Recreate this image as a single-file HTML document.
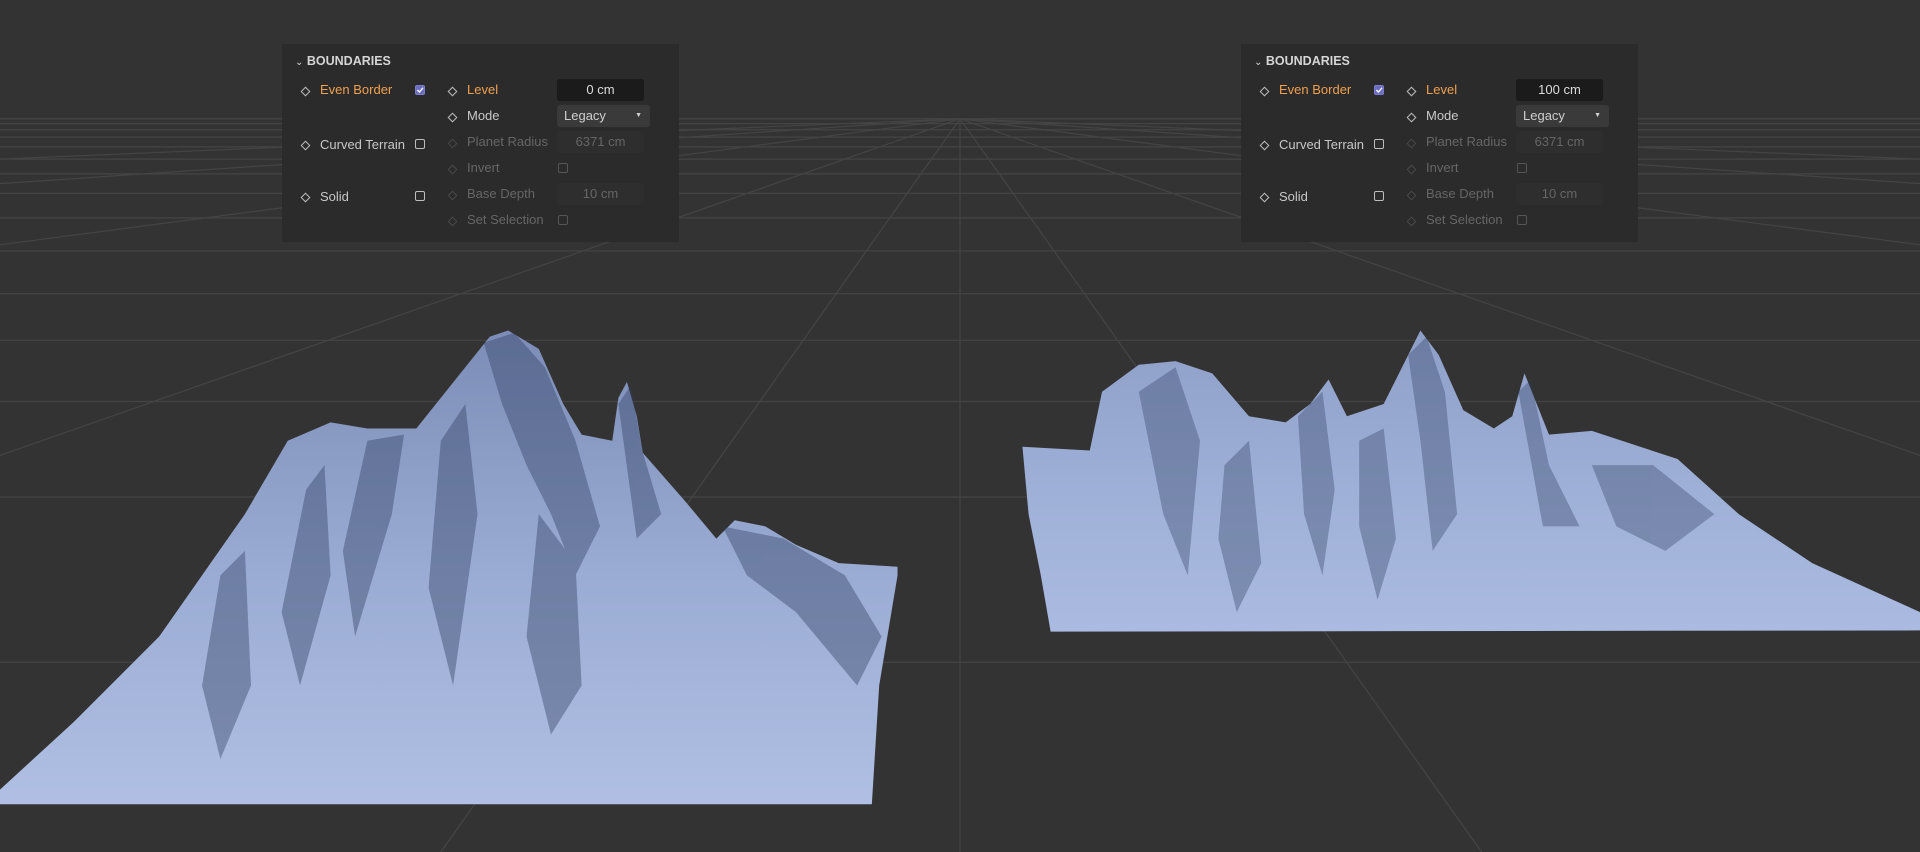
<!DOCTYPE html>
<html><head><meta charset="utf-8"><style>
html,body{margin:0;padding:0;width:1920px;height:852px;overflow:hidden;background:#333333;font-family:"Liberation Sans",sans-serif}
svg.bg{position:absolute;left:0;top:0}
.panel{position:absolute;top:44px;width:397px;height:198px;background:#2b2b2b;color:#c8c8c8;font-size:13px}
.panel .t{position:absolute;white-space:nowrap;line-height:16px}
.hd{font-weight:bold;color:#d6d6d6;font-size:12.5px}
.or{color:#f0a050}
.dim{color:#666}
.dia{position:absolute;width:5px;height:5px;border:1.2px solid #bdbdbd;transform:rotate(45deg)}
.dia.d{border-color:#484848}
.cb{position:absolute;width:8px;height:8px;border:1.2px solid #bdbdbd;border-radius:2px}
.cb.d{border-color:#555}
.cb.on{background:#6c6cc0;border-color:#7c7cd0}
.inp{position:absolute;height:22px;border-radius:3px;text-align:center;line-height:22px;font-size:13px}
</style></head><body>
<svg class="bg" width="1920" height="852" viewBox="0 0 1568 696" preserveAspectRatio="none">
<defs>
<linearGradient id="g1" x1="0" y1="0" x2="0" y2="1">
<stop offset="0" stop-color="#7b8cb6"/><stop offset="0.5" stop-color="#9aabd3"/><stop offset="1" stop-color="#b0bfe3"/></linearGradient>
<linearGradient id="g2" x1="0" y1="0" x2="0" y2="1">
<stop offset="0" stop-color="#8e9fc8"/><stop offset="0.6" stop-color="#a1b2d9"/><stop offset="1" stop-color="#aabae0"/></linearGradient>
</defs>
<g stroke="#444" stroke-width="1" fill="none">
<line x1="0" y1="97" x2="1568" y2="97"/><line x1="0" y1="101" x2="1568" y2="101"/><line x1="0" y1="106" x2="1568" y2="106"/><line x1="0" y1="112" x2="1568" y2="112"/><line x1="0" y1="120" x2="1568" y2="120"/><line x1="0" y1="130" x2="1568" y2="130"/><line x1="0" y1="142" x2="1568" y2="142"/><line x1="0" y1="158" x2="1568" y2="158"/><line x1="0" y1="178" x2="1568" y2="178"/><line x1="0" y1="205" x2="1568" y2="205"/><line x1="0" y1="240" x2="1568" y2="240"/><line x1="0" y1="278" x2="1568" y2="278"/><line x1="0" y1="328" x2="1568" y2="328"/><line x1="0" y1="406" x2="1568" y2="406"/><line x1="0" y1="541" x2="1568" y2="541"/>
<line x1="784" y1="97" x2="784" y2="696"/>
<line x1="784" y1="97" x2="0" y2="372"/><line x1="784" y1="97" x2="0" y2="200"/><line x1="784" y1="97" x2="0" y2="150"/>
<line x1="784" y1="97" x2="1568" y2="372"/><line x1="784" y1="97" x2="1568" y2="200"/><line x1="784" y1="97" x2="1568" y2="150"/>
<line x1="784" y1="97" x2="360" y2="696"/><line x1="784" y1="97" x2="1210" y2="696"/>
<line x1="784" y1="97" x2="0" y2="130"/><line x1="784" y1="97" x2="1568" y2="130"/>
</g>
<polygon fill="url(#g1)" points="0,645 60,590 130,520 200,420 235,360 270,345 300,350 340,350 380,300 400,275 415,270 440,285 460,330 475,355 500,360 505,325 512,312 520,340 525,370 560,410 585,440 600,425 625,430 650,445 685,460 733,463 733,470 718,560 712,657 0,657"/>
<g fill="#2e3d60" opacity="0.4">
<polygon points="395,280 420,272 445,300 470,360 490,430 470,470 450,420 430,380 410,330"/>
<polygon points="505,330 515,315 525,370 540,420 520,440"/>
<polygon points="300,360 330,355 320,420 290,520 280,450"/>
<polygon points="250,400 265,380 270,470 245,560 230,500"/>
<polygon points="360,360 380,330 390,420 370,560 350,480"/>
<polygon points="590,430 640,440 690,470 720,520 700,560 650,500 610,470"/>
<polygon points="180,470 200,450 205,560 180,620 165,560"/>
<polygon points="440,420 470,460 475,560 450,600 430,520"/>
</g>
<polygon fill="url(#g2)" points="835,365 890,368 900,320 930,298 960,295 990,305 1020,340 1050,345 1070,330 1085,310 1100,340 1130,330 1145,300 1160,270 1175,290 1195,335 1220,350 1235,340 1245,305 1255,330 1265,355 1300,352 1370,375 1420,420 1480,460 1568,500 1568,515 858,516 850,470 840,420"/>
<g fill="#2e3d60" opacity="0.35">
<polygon points="1150,290 1165,275 1180,320 1190,420 1170,450 1160,360"/>
<polygon points="1240,320 1250,310 1265,380 1290,430 1260,430"/>
<polygon points="930,320 960,300 980,360 970,470 950,420"/>
<polygon points="1060,340 1080,320 1090,400 1080,470 1065,420"/>
<polygon points="1300,380 1350,380 1400,420 1360,450 1320,430"/>
<polygon points="1000,380 1020,360 1030,460 1010,500 995,440"/>
<polygon points="1110,360 1130,350 1140,440 1125,490 1110,430"/>
</g>
</svg>
<div class="panel" style="left:282px">
<div class="t hd" style="left:13px;top:9px"><span style="font-weight:normal;font-size:10px">&#8964;</span> BOUNDARIES</div>
<div class="dia" style="left:20px;top:44px"></div><div class="t or" style="left:38px;top:38px">Even Border</div><div class="cb on" style="left:133px;top:41px"><svg width="8" height="8" style="position:absolute;left:0;top:0"><path d="M1.3 4 L3.4 6 L7 1.8" stroke="#fff" stroke-width="1.3" fill="none"/></svg></div>
<div class="dia" style="left:20px;top:98px"></div><div class="t" style="left:38px;top:93px">Curved Terrain</div><div class="cb" style="left:133px;top:95px"></div>
<div class="dia" style="left:20px;top:150px"></div><div class="t" style="left:38px;top:145px">Solid</div><div class="cb" style="left:133px;top:147px"></div>
<div class="dia" style="left:167px;top:44px"></div><div class="t or" style="left:185px;top:38px">Level</div><div class="inp" style="left:275px;top:35px;width:87px;background:#1b1b1b;color:#dcdcdc">0 cm</div>
<div class="dia" style="left:167px;top:70px"></div><div class="t" style="left:185px;top:64px">Mode</div><div class="inp" style="left:275px;top:61px;width:93px;background:#3a3a3a;color:#d0d0d0;text-align:left;padding-left:7px;box-sizing:border-box">Legacy<span style="position:absolute;right:8px;top:0;font-size:7px">&#9660;</span></div>
<div class="dia d" style="left:167px;top:96px"></div><div class="t dim" style="left:185px;top:90px">Planet Radius</div><div class="inp dim" style="left:275px;top:87px;width:87px;background:#2e2e2e">6371 cm</div>
<div class="dia d" style="left:167px;top:122px"></div><div class="t dim" style="left:185px;top:116px">Invert</div><div class="cb d" style="left:276px;top:119px"></div>
<div class="dia d" style="left:167px;top:148px"></div><div class="t dim" style="left:185px;top:142px">Base Depth</div><div class="inp dim" style="left:275px;top:139px;width:87px;background:#2e2e2e">10 cm</div>
<div class="dia d" style="left:167px;top:174px"></div><div class="t dim" style="left:185px;top:168px">Set Selection</div><div class="cb d" style="left:276px;top:171px"></div>
</div>
<div class="panel" style="left:1241px">
<div class="t hd" style="left:13px;top:9px"><span style="font-weight:normal;font-size:10px">&#8964;</span> BOUNDARIES</div>
<div class="dia" style="left:20px;top:44px"></div><div class="t or" style="left:38px;top:38px">Even Border</div><div class="cb on" style="left:133px;top:41px"><svg width="8" height="8" style="position:absolute;left:0;top:0"><path d="M1.3 4 L3.4 6 L7 1.8" stroke="#fff" stroke-width="1.3" fill="none"/></svg></div>
<div class="dia" style="left:20px;top:98px"></div><div class="t" style="left:38px;top:93px">Curved Terrain</div><div class="cb" style="left:133px;top:95px"></div>
<div class="dia" style="left:20px;top:150px"></div><div class="t" style="left:38px;top:145px">Solid</div><div class="cb" style="left:133px;top:147px"></div>
<div class="dia" style="left:167px;top:44px"></div><div class="t or" style="left:185px;top:38px">Level</div><div class="inp" style="left:275px;top:35px;width:87px;background:#1b1b1b;color:#dcdcdc">100 cm</div>
<div class="dia" style="left:167px;top:70px"></div><div class="t" style="left:185px;top:64px">Mode</div><div class="inp" style="left:275px;top:61px;width:93px;background:#3a3a3a;color:#d0d0d0;text-align:left;padding-left:7px;box-sizing:border-box">Legacy<span style="position:absolute;right:8px;top:0;font-size:7px">&#9660;</span></div>
<div class="dia d" style="left:167px;top:96px"></div><div class="t dim" style="left:185px;top:90px">Planet Radius</div><div class="inp dim" style="left:275px;top:87px;width:87px;background:#2e2e2e">6371 cm</div>
<div class="dia d" style="left:167px;top:122px"></div><div class="t dim" style="left:185px;top:116px">Invert</div><div class="cb d" style="left:276px;top:119px"></div>
<div class="dia d" style="left:167px;top:148px"></div><div class="t dim" style="left:185px;top:142px">Base Depth</div><div class="inp dim" style="left:275px;top:139px;width:87px;background:#2e2e2e">10 cm</div>
<div class="dia d" style="left:167px;top:174px"></div><div class="t dim" style="left:185px;top:168px">Set Selection</div><div class="cb d" style="left:276px;top:171px"></div>
</div>
</body></html>
